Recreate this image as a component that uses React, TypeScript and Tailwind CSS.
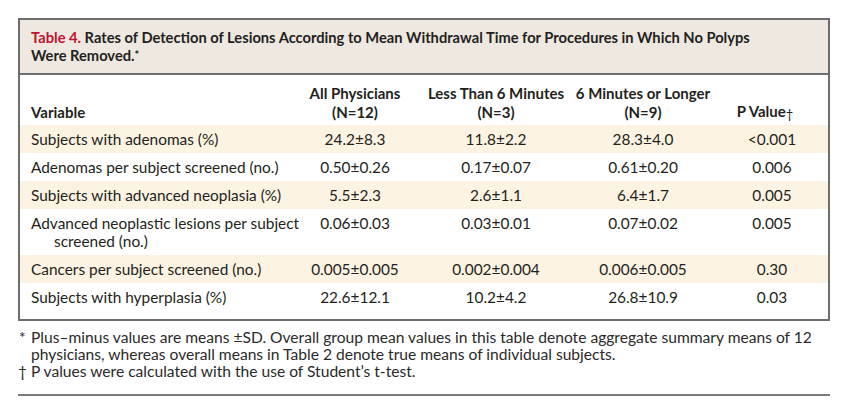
import React from 'react';

type Row = {
  label: string;
  all: string;
  less: string;
  more: string;
  p: string;
};

const rows: Row[] = [
  { label: 'Subjects with adenomas (%)', all: '24.2±8.3', less: '11.8±2.2', more: '28.3±4.0', p: '<0.001' },
  { label: 'Adenomas per subject screened (no.)', all: '0.50±0.26', less: '0.17±0.07', more: '0.61±0.20', p: '0.006' },
  { label: 'Subjects with advanced neoplasia (%)', all: '5.5±2.3', less: '2.6±1.1', more: '6.4±1.7', p: '0.005' },
  { label: 'Advanced neoplastic lesions per subject screened (no.)', all: '0.06±0.03', less: '0.03±0.01', more: '0.07±0.02', p: '0.005' },
  { label: 'Cancers per subject screened (no.)', all: '0.005±0.005', less: '0.002±0.004', more: '0.006±0.005', p: '0.30' },
  { label: 'Subjects with hyperplasia (%)', all: '22.6±12.1', less: '10.2±4.2', more: '26.8±10.9', p: '0.03' },
];

// column widths (label, all, <6, >=6, p)
const colClasses = ['w-[280px] pl-[11px]', 'w-[110px]', 'w-[172px]', 'w-[122px]', 'flex-1 pl-3'];

function Cell({ idx, children }: { idx: number; children: React.ReactNode }) {
  return (
    <div className={`${colClasses[idx]} flex justify-center shrink-0`}>
      <div className="whitespace-nowrap">{children}</div>
    </div>
  );
}

export default function App() {
  return (
    <div
      className="w-[849px] h-[412px] bg-white text-[#231f20] pt-[18px] pl-[18px]"
      style={{ fontFamily: 'Lato, "Open Sans", sans-serif' }}
    >
      <div className="w-[812px] border-2 border-[#6e6e6e]">
        {/* title */}
        <div className="bg-[#efe8e1] border-b-2 border-[#6e6e6e] pl-[11px] pr-4 pt-[8px] pb-[9px] text-[14.7px] leading-[18px] font-bold">
          <span className="text-[#c0132f]">Table 4.</span> Rates of Detection of Lesions According to Mean Withdrawal Time for
          Procedures in Which No Polyps
          <br />
          Were Removed.<span className="text-[11px] align-top">*</span>
        </div>

        {/* header */}
        <div className="flex items-end pt-[9px] pb-[3px] text-[15px] leading-[19px] font-bold">
          <div className={`${colClasses[0]} shrink-0`}>Variable</div>
          <Cell idx={1}>
            <div className="text-center">All Physicians<br />(N=12)</div>
          </Cell>
          <Cell idx={2}>
            <div className="text-center">Less Than 6 Minutes<br />(N=3)</div>
          </Cell>
          <Cell idx={3}>
            <div className="text-center">6 Minutes or Longer<br />(N=9)</div>
          </Cell>
          <div className="flex-1 flex justify-center pr-[2px]">
            <div className="whitespace-nowrap">
              P Value<span className="text-[13px] font-normal relative top-[2px]">†</span>
            </div>
          </div>
        </div>

        {/* body */}
        <div className="pb-[8px] text-[15.4px] leading-[18px]">
          {rows.map((r, i) => (
            <div key={r.label} className={`flex items-start py-[5px] ${i % 2 === 0 ? 'bg-[#fdf3e3]' : 'bg-white'}`}>
              <div className={`${colClasses[0]} shrink-0`}>
                <div className="pl-[23px] -indent-[23px]">{r.label}</div>
              </div>
              <Cell idx={1}>{r.all}</Cell>
              <Cell idx={2}>{r.less}</Cell>
              <Cell idx={3}>{r.more}</Cell>
              <Cell idx={4}>{r.p}</Cell>
            </div>
          ))}
        </div>
      </div>

      {/* footnotes */}
      <div className="w-[820px] mt-[8px] text-[15.6px] leading-[17px] text-[#2a2a2a]">
        <div className="flex">
          <span className="w-[13px] shrink-0 pl-[1px]">*</span>
          <span>
            Plus–minus values are means ±SD. Overall group mean values in this table denote aggregate summary means of 12
            physicians, whereas overall means in Table 2 denote true means of individual subjects.
          </span>
        </div>
        <div className="flex">
          <span className="w-[13px] shrink-0">†</span>
          <span>P values were calculated with the use of Student’s t-test.</span>
        </div>
      </div>
      <div className="w-[812px] mt-[14px] h-[2px] bg-[#7a7a7a]" />
    </div>
  );
}
